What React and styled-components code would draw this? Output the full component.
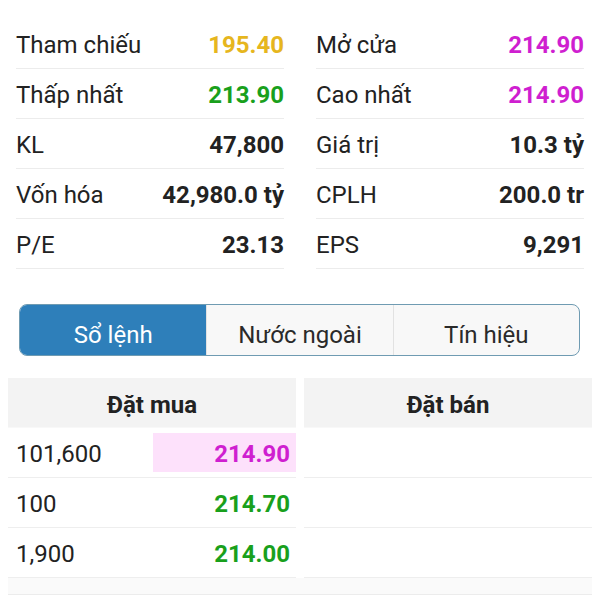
import React from "react";
import styled, { createGlobalStyle } from "styled-components";

const GlobalStyle = createGlobalStyle`
  body {
    margin: 0;
    background: #fff;
    font-family: Roboto, "Liberation Sans", sans-serif;
    color: #222;
  }
`;

const COLORS = {
  ref: "#e6b61e",
  up: "#19a01c",
  ceil: "#cf1fd0",
  plain: "#222"
};

const Page = styled.div`
  width: 600px;
  height: 600px;
  overflow: hidden;
  background: #fff;
`;

const StatsGrid = styled.div`
  display: grid;
  grid-template-columns: 1fr 1fr;
  column-gap: 32px;
  padding: 19px 16px 0;
`;

const StatRow = styled.div`
  display: flex;
  align-items: center;
  justify-content: space-between;
  height: 50px;
  padding-top: 3px;
  box-sizing: border-box;
  border-bottom: 1px solid #ececec;
  font-size: 24px;
`;

const StatLabel = styled.span`
  color: #222;
`;

const StatValue = styled.span`
  font-weight: 700;
  color: ${props => props.color || COLORS.plain};
`;

const Tabs = styled.div`
  display: grid;
  grid-template-columns: repeat(3, 1fr);
  margin: 35px 20px 0 19px;
  height: 50px;
  border: 1.5px solid #6f9bb2;
  border-radius: 8px;
  overflow: hidden;
  background: #f8f8f8;
`;

const Tab = styled.div`
  display: flex;
  align-items: center;
  justify-content: center;
  padding-top: 9px;
  font-size: 24px;
  color: ${props => (props.active ? "#fff" : "#2a2a2a")};
  background: ${props => (props.active ? "#2e7fba" : "transparent")};
  & + & {
    border-left: 1px solid #e2e2e2;
  }
`;

const Book = styled.div`
  display: grid;
  grid-template-columns: 1fr 1fr;
  column-gap: 8px;
  margin: 22px 8px 0;
`;

const Side = styled.div`
  display: flex;
  flex-direction: column;
`;

const SideHeader = styled.div`
  display: flex;
  align-items: center;
  justify-content: center;
  height: 50px;
  padding-top: 5px;
  box-sizing: border-box;
  background: #f3f3f3;
  border-bottom: 1px solid #f8f8f8;
  font-size: 24px;
  font-weight: 700;
  color: #222;
`;

const BookRow = styled.div`
  display: flex;
  align-items: center;
  justify-content: space-between;
  height: 50px;
  box-sizing: border-box;
  border-bottom: 1px solid #eeeeee;
  font-size: 24px;
`;

const Qty = styled.span`
  padding-left: 8px;
  padding-top: 3px;
  color: #222;
`;

const Price = styled.span`
  display: flex;
  align-items: center;
  justify-content: flex-end;
  width: 143px;
  height: 39px;
  padding-right: 6px;
  padding-top: 3px;
  box-sizing: border-box;
  font-weight: 700;
  color: ${props => props.color};
  background: ${props => props.bg || "transparent"};
`;

const Footer = styled.div`
  grid-column: 1 / -1;
  height: 16px;
  background: #fafafa;
  border-bottom: 1px solid #ececec;
`;

const stats = [
  [
    { label: "Tham chiếu", value: "195.40", color: COLORS.ref },
    { label: "Thấp nhất", value: "213.90", color: COLORS.up },
    { label: "KL", value: "47,800" },
    { label: "Vốn hóa", value: "42,980.0 tỷ" },
    { label: "P/E", value: "23.13" }
  ],
  [
    { label: "Mở cửa", value: "214.90", color: COLORS.ceil },
    { label: "Cao nhất", value: "214.90", color: COLORS.ceil },
    { label: "Giá trị", value: "10.3 tỷ" },
    { label: "CPLH", value: "200.0 tr" },
    { label: "EPS", value: "9,291" }
  ]
];

const bids = [
  { qty: "101,600", price: "214.90", color: COLORS.ceil, bg: "#fde1fb" },
  { qty: "100", price: "214.70", color: COLORS.up },
  { qty: "1,900", price: "214.00", color: COLORS.up }
];

export default function App() {
  return (
    <Page>
      <GlobalStyle />
      <StatsGrid>
        {stats.map((col, i) => (
          <div key={i}>
            {col.map(s => (
              <StatRow key={s.label}>
                <StatLabel>{s.label}</StatLabel>
                <StatValue color={s.color}>{s.value}</StatValue>
              </StatRow>
            ))}
          </div>
        ))}
      </StatsGrid>

      <Tabs>
        <Tab active>Sổ lệnh</Tab>
        <Tab>Nước ngoài</Tab>
        <Tab>Tín hiệu</Tab>
      </Tabs>

      <Book>
        <Side>
          <SideHeader>Đặt mua</SideHeader>
          {bids.map(b => (
            <BookRow key={b.qty}>
              <Qty>{b.qty}</Qty>
              <Price color={b.color} bg={b.bg}>
                {b.price}
              </Price>
            </BookRow>
          ))}
        </Side>
        <Side>
          <SideHeader>Đặt bán</SideHeader>
          {bids.map(b => (
            <BookRow key={b.qty} />
          ))}
        </Side>
        <Footer />
      </Book>
    </Page>
  );
}
